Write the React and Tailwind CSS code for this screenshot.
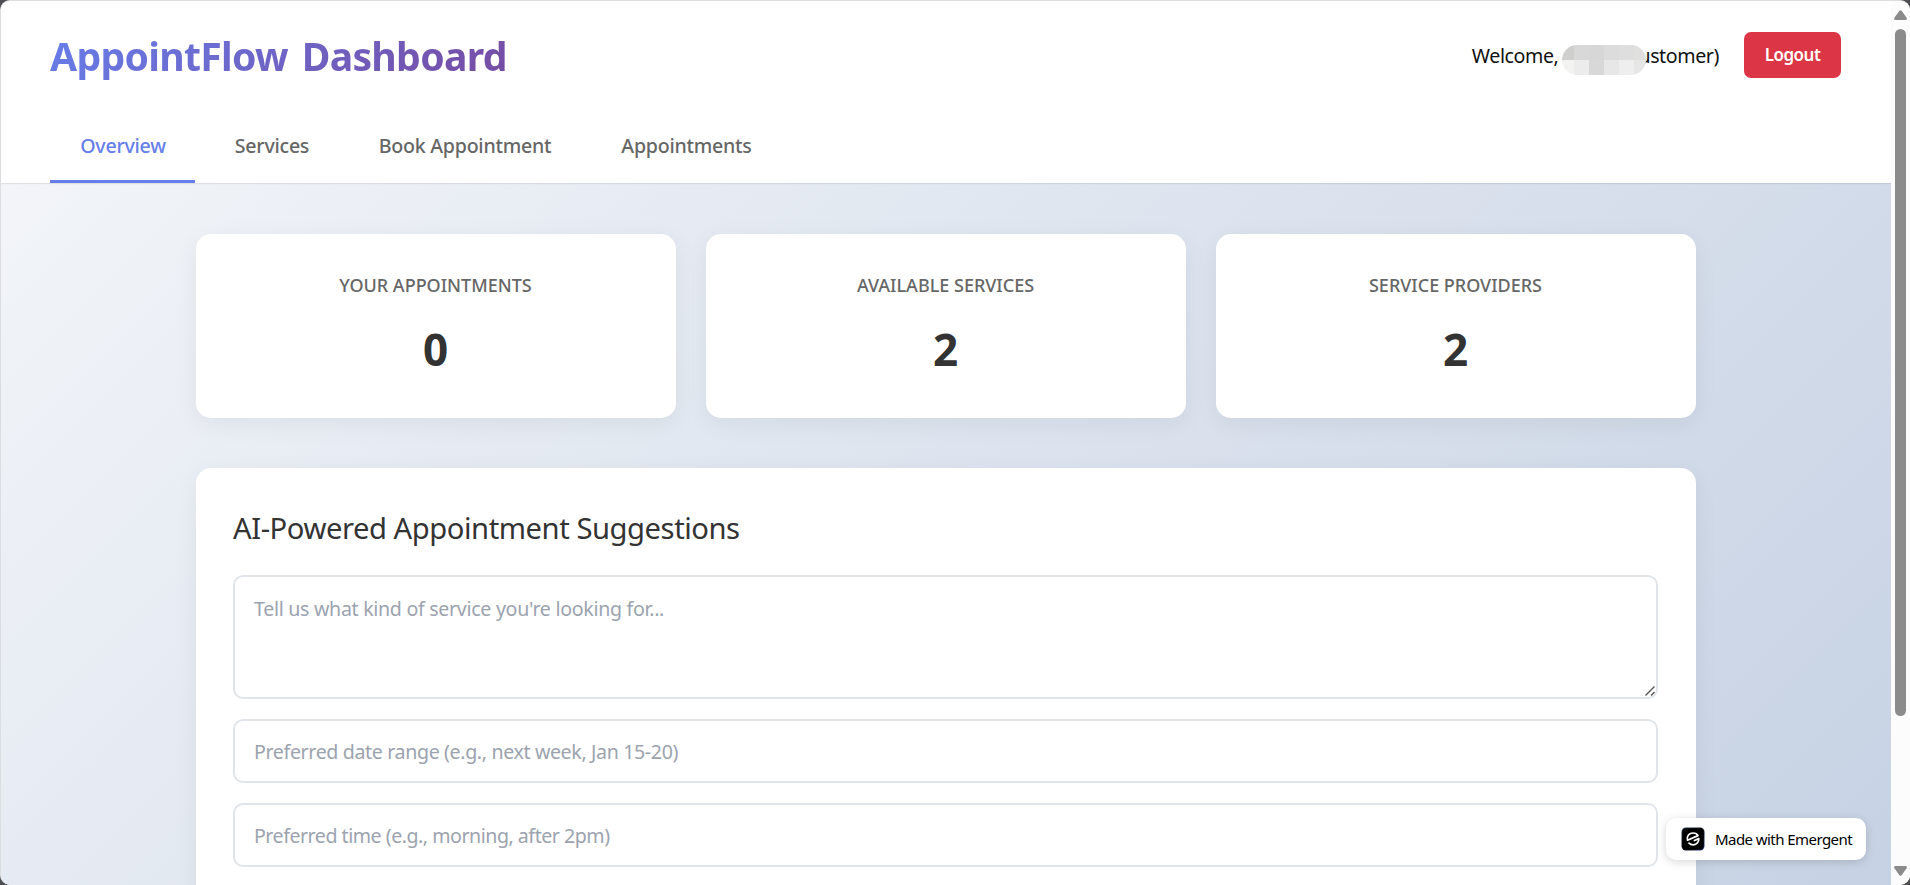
import clsx from "clsx";

const tabs = [
  { id: "overview", label: "Overview", width: "w-[145px]" },
  { id: "services", label: "Services", width: "w-[133px]" },
  { id: "book", label: "Book Appointment", width: "w-[233px]" },
  { id: "appointments", label: "Appointments", width: "w-[190px]" }
];

const stats = [
  { label: "Your Appointments", value: 0 },
  { label: "Available Services", value: 2 },
  { label: "Service Providers", value: 2 }
];

// Blurred-out user name, drawn as two rows of grey blocks
const maskRows = [
  ["bg-[#cfcfce]", "bg-[#d8d8d8]", "bg-[#d7d7d7]", "bg-[#dcdcdc]", "bg-[#dedede]", "bg-[#dfdfde]"],
  ["bg-[#f3f3f2]", "bg-[#ececec]", "bg-[#d8d8d8]", "bg-[#e7e7e7]", "bg-[#eeeeee]", "bg-[#e6e6e6]"]
];

function NameMask() {
  return (
    <span className="relative z-10 mt-[8px] flex h-[30px] w-[84px] flex-col overflow-hidden rounded-full">
      {maskRows.map((row, i) => (
        <span key={i} className="flex flex-1">
          {row.map((color, j) => (
            <span key={j} className={clsx("h-full", j === 0 || j === 5 ? "w-[12px]" : "w-[15px]", color)} />
          ))}
        </span>
      ))}
    </span>
  );
}

function Header() {
  return (
    <header className="h-[182px] shrink-0 bg-white pr-[50px] pl-[49px] shadow-[0_1px_1px_rgba(0,0,0,0.08)]">
      <div className="flex h-[109px] items-center justify-between">
        <h1 className="mt-[1px] bg-linear-[135deg,#667eea_0%,#764ba2_100%] bg-clip-text text-[39.2px] leading-[54px] font-bold tracking-[-0.73px] whitespace-nowrap text-transparent [word-spacing:4.5px]">
          AppointFlow Dashboard
        </h1>
        <div className="flex items-center gap-[25px]">
          <div className="flex items-center text-[19.6px] leading-[30px] tracking-[-0.4px] whitespace-nowrap text-[#111]">
            <span className="mr-[4px]">Welcome,</span>
            <NameMask />
            <span className="-ml-[8px]">ustomer)</span>
          </div>
          <button className="mb-[1px] h-[46px] w-[97px] rounded-[7px] bg-[#dc3545] text-[17px] font-semibold tracking-[-0.5px] text-white">
            Logout
          </button>
        </div>
      </div>
      <nav className="flex h-[73px] gap-[10px]">
        {tabs.map((tab, i) => (
          <button
            key={tab.id}
            className={clsx(
              "border-b-[3px] pt-[2px] pl-[1px] text-[19.6px] font-medium tracking-[-0.25px] whitespace-nowrap",
              tab.width,
              i === 0 ? "border-[#667eea] text-[#667eea]" : "border-transparent text-[#666]"
            )}
          >
            {tab.label}
          </button>
        ))}
      </nav>
    </header>
  );
}

function StatCard({ label, value }) {
  return (
    <div className="h-[184px] flex-1 rounded-[15px] bg-white pt-[38px] text-center shadow-[0_6px_25px_rgba(0,0,0,0.06)]">
      <h3 className="pr-[1px] text-[18px] leading-[27px] font-medium text-[#666] uppercase">{label}</h3>
      <p className="mt-[20px] pr-[1px] text-[44px] leading-[60px] font-bold text-[#333]">{value}</p>
    </div>
  );
}

function Suggestions() {
  const field =
    "block w-full rounded-[10px] border-2 border-[#e1e5e9] bg-white px-[19px] text-[19.6px] text-[#333] placeholder:text-[#9ca3af] outline-none";

  return (
    <section className="mt-[50px] h-[600px] rounded-[15px] bg-white pr-[38px] pl-[37px] pt-[38px] shadow-[0_6px_25px_rgba(0,0,0,0.06)]">
      <h2 className="text-[29.2px] leading-[45px] tracking-[-0.45px] text-[#333]">
        AI-Powered Appointment Suggestions
      </h2>
      <div className="mt-[24px] flex flex-col gap-[20px]">
        <div className="relative">
          <textarea
            className={clsx(field, "h-[124px] resize-none pt-[18px] leading-[28px] tracking-[-0.3px]")}
            placeholder="Tell us what kind of service you're looking for..."
          />
          <svg
            className="absolute right-[3px] bottom-[3px]"
            width="10"
            height="10"
            viewBox="0 0 10 10"
            stroke="#555"
            strokeWidth="1.4"
          >
            <path d="M.5 9.5L9.5.5M6 9.5L9.5 6" />
          </svg>
        </div>
        <input
          className={clsx(field, "h-[64px] tracking-[-0.36px]")}
          placeholder="Preferred date range (e.g., next week, Jan 15-20)"
        />
        <input
          className={clsx(field, "h-[64px] tracking-[-0.48px]")}
          placeholder="Preferred time (e.g., morning, after 2pm)"
        />
      </div>
    </section>
  );
}

function EmergentBadge() {
  return (
    <a className="absolute top-[817px] left-[1665px] flex h-[42px] w-[200px] items-center rounded-[10px] bg-white pl-[15px] shadow-[0_2px_10px_rgba(0,0,0,0.16)]">
      <svg width="24" height="24" viewBox="0 0 24 24" fill="none">
        <defs>
          <linearGradient id="badge-edge" x1="0" y1="0" x2="24" y2="24" gradientUnits="userSpaceOnUse">
            <stop stopColor="#39506e" />
            <stop offset="0.5" stopColor="#111" />
            <stop offset="1" stopColor="#2b4a9a" />
          </linearGradient>
        </defs>
        <rect x="0.5" y="0.5" width="23" height="23" rx="4.5" fill="url(#badge-edge)" />
        <rect x="1.3" y="1.3" width="21.4" height="21.4" rx="4" fill="#000" />
        <g stroke="#fff" strokeWidth="1.7" strokeLinecap="round" strokeLinejoin="round">
          <path d="M6.5 13.2C5.2 9 8.4 6 12 6 14.4 6 16.2 6.9 17 8.6Z" />
          <path d="M8 16.2C10.3 18.6 14.4 18.4 16.5 15.8 17.5 14.6 17.9 13.2 17.8 11.6L13.4 13.5" />
        </g>
      </svg>
      <span className="ml-[10px] text-[15px] tracking-[-0.56px] whitespace-nowrap text-black">Made with Emergent</span>
    </a>
  );
}

function Scrollbar() {
  return (
    <div className="flex w-[19px] shrink-0 flex-col items-center bg-[#fcfcfc] pt-[9px] pr-[1px]">
      <svg width="13" height="10" viewBox="0 0 13 10" fill="#8b8b8b">
        <path d="M5.4.8Q6.5-.5 7.6.8L12.6 7.8Q13.4 10 11.5 10H1.5Q-.4 10 .4 7.8Z" />
      </svg>
      <div className="mt-[9px] h-[687px] w-[11px] rounded-full bg-[#8b8b8b]" />
      <svg className="mt-[150px]" width="13" height="10" viewBox="0 0 13 10" fill="#8b8b8b">
        <path d="M5.4 9.2Q6.5 10.5 7.6 9.2L12.6 2.2Q13.4 0 11.5 0H1.5Q-.4 0 .4 2.2Z" />
      </svg>
    </div>
  );
}

function App() {
  return (
    <div className="h-[885px] w-[1910px] overflow-hidden bg-[#4d4d52] font-['Noto_Sans',sans-serif]">
      <div className="relative flex h-full overflow-hidden rounded-[10px] border-t border-l border-[#dcdde0] bg-[#fcfcfc]">
        <div className="flex h-[1071px] flex-1 flex-col bg-linear-[135deg,#f5f7fa_0%,#c3cfe2_100%]">
          <Header />
          <main className="mx-auto w-[1500px] pt-[51px]">
            <div className="flex gap-[30px]">
              {stats.map((stat) => (
                <StatCard key={stat.label} {...stat} />
              ))}
            </div>
            <Suggestions />
          </main>
        </div>
        <Scrollbar />
        <EmergentBadge />
      </div>
    </div>
  );
}

export default App;
